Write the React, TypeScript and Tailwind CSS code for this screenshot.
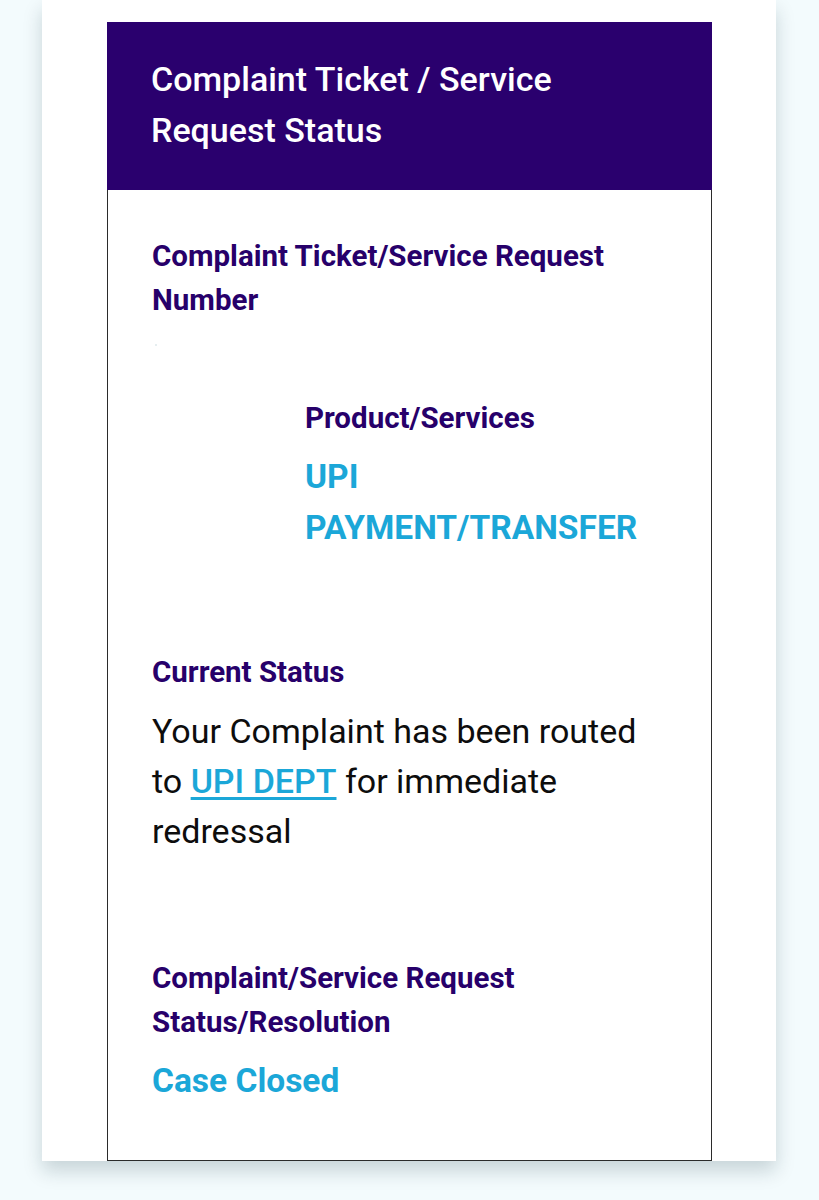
export default function App() {
  return (
    <div
      className="min-h-[1200px] bg-[#f3fbfd] px-[42px]"
      style={{ fontFamily: 'Roboto, "Noto Sans", sans-serif' }}
    >
      <div className="w-[734px] bg-white pt-[22px] pl-[65px] shadow-[0_10px_18px_rgba(0,40,50,0.18)]">
        <div className="w-[605px]">
          <div className="h-[168px] bg-[#2a006e] px-[44px] pt-[32px]">
            <h1 className="text-[34px] leading-[51px] font-medium text-white">
              Complaint Ticket / Service
              <br />
              Request Status
            </h1>
          </div>

          <div className="border-x border-b border-[#2b2b2b] px-[44px] pt-[44px] pb-[54px]">
            <Label>
              Complaint Ticket/Service Request
              <br />
              Number
            </Label>
            <div className="h-[74px] pt-[22px]">
              <span className="ml-[3px] block h-[2px] w-[2px] bg-[#e6eef0]" />
            </div>

            <div className="pl-[153px]">
              <Label>Product/Services</Label>
              <Value className="mt-[11px]">
                UPI
                <br />
                PAYMENT/TRANSFER
              </Value>
            </div>

            <div className="mt-[97px]">
              <Label>Current Status</Label>
              <p className="mt-[12px] text-[34px] leading-[50px] text-[#0d0d0d]">
                Your Complaint has been routed
                <br />
                to{' '}
                <a
                  href="#"
                  className="font-medium text-[#1ba7d8] underline underline-offset-[4px] decoration-[3px]"
                >
                  UPI DEPT
                </a>{' '}
                for immediate
                <br />
                redressal
              </p>
            </div>

            <div className="mt-[100px]">
              <Label>
                Complaint/Service Request
                <br />
                Status/Resolution
              </Label>
              <Value className="mt-[11px]">Case Closed</Value>
            </div>
          </div>
        </div>
      </div>
    </div>
  );
}

function Label({ children }: { children: React.ReactNode }) {
  return (
    <h2 className="text-[29.5px] leading-[44px] font-bold text-[#27006a]">
      {children}
    </h2>
  );
}

function Value({
  children,
  className = '',
}: {
  children: React.ReactNode;
  className?: string;
}) {
  return (
    <p className={`text-[33.5px] leading-[51px] font-bold text-[#1ba7d8] ${className}`}>
      {children}
    </p>
  );
}
